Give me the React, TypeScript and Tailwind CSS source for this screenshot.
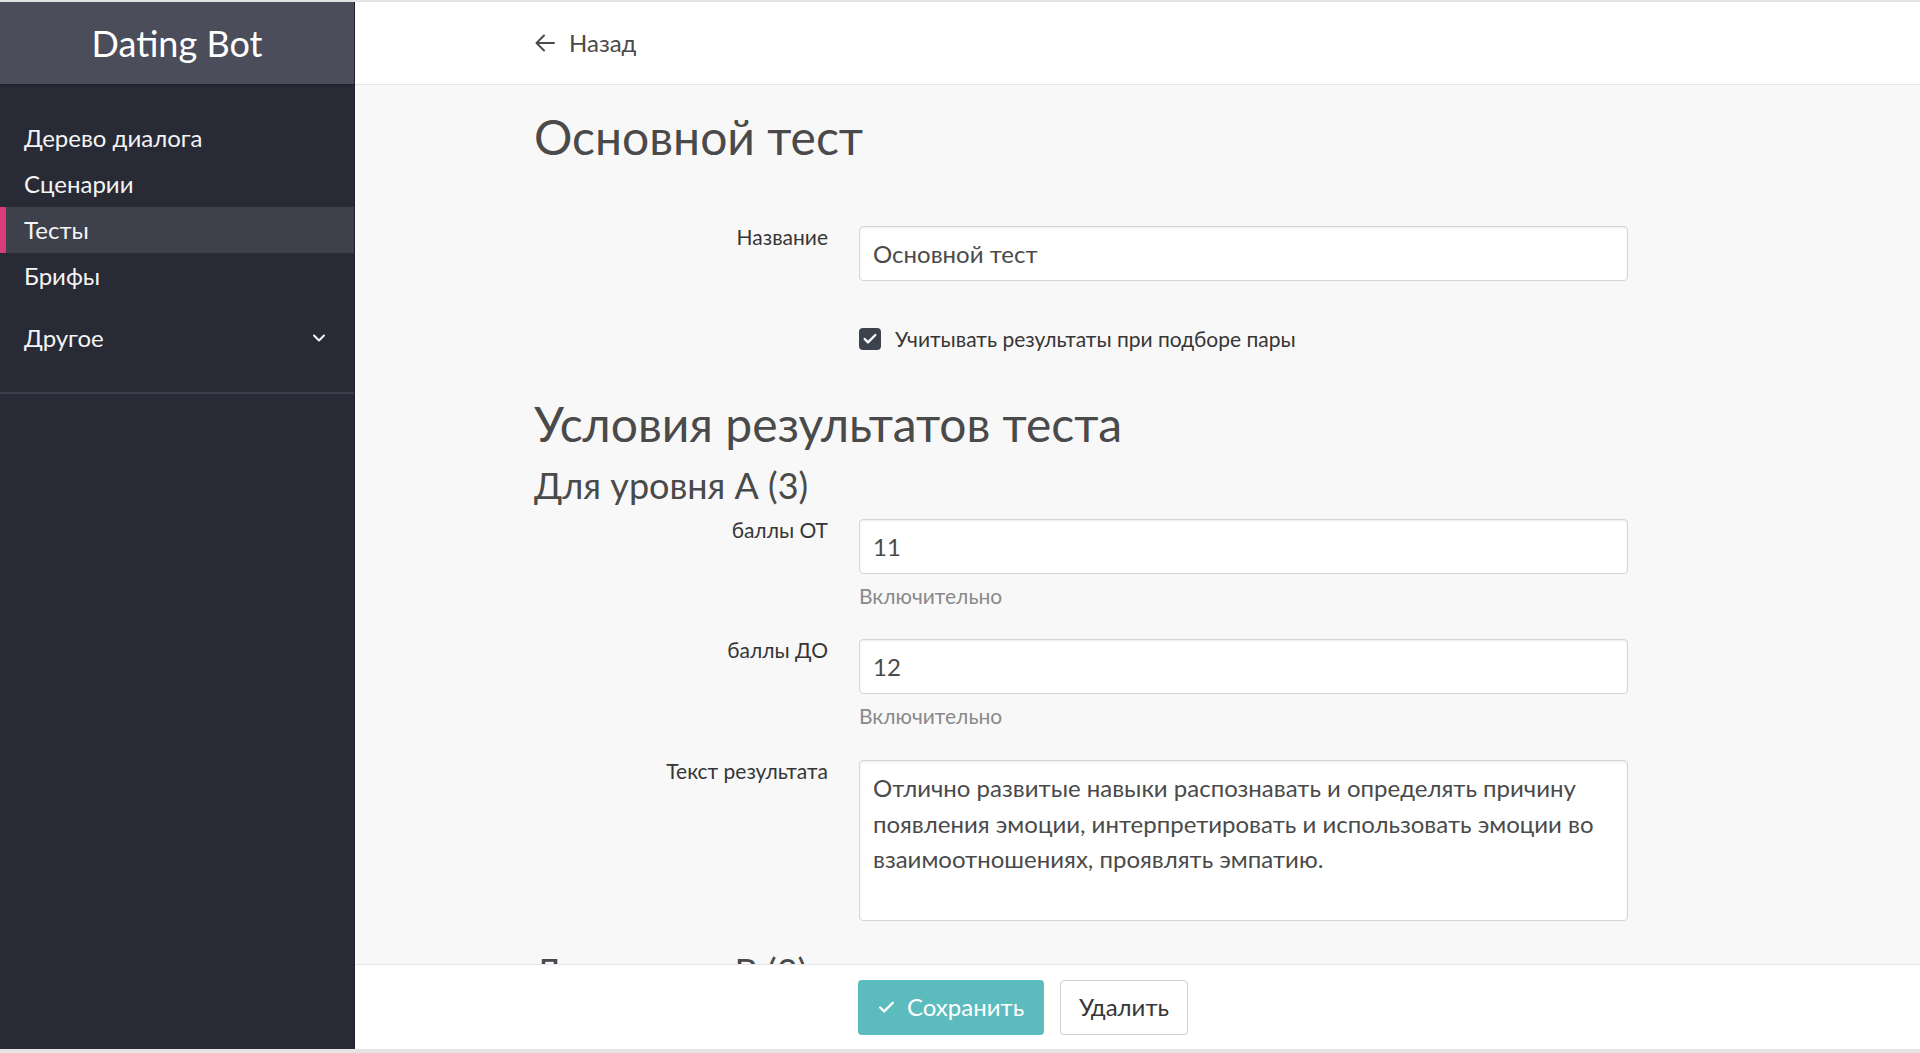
import { ChevronDown, Check } from "lucide-react";

const menu = ["Дерево диалога", "Сценарии", "Тесты", "Брифы"];

function Field({ label, children, help }: { label: string; children: React.ReactNode; help?: string }) {
  return (
    <div className="grid grid-cols-[294px_769px] gap-x-[31px]">
      <div className="text-right text-[21px] leading-[22px] text-[#363636]">{label}</div>
      <div>
        {children}
        {help && <p className="mt-[10px] text-[21px] leading-[24px] text-[#8a8a8a]">{help}</p>}
      </div>
    </div>
  );
}

const inputCls =
  "block w-full h-[55px] rounded-[4px] border border-[#d3d6db] bg-white px-[13px] text-[24px] text-[#4a4a4a] shadow-[inset_0_1px_2px_rgba(10,10,10,0.08)] outline-none";

export default function App() {
  return (
    <div className="h-screen w-full bg-[#e4e4e4] pt-[2px] pb-[4px] font-['Lato',sans-serif]">
      <div className="flex h-full">
        {/* Sidebar */}
        <aside className="w-[355px] shrink-0 bg-[#282a36] border-r border-[#1f2029] flex flex-col">
          <div className="h-[82px] bg-[#4b4e5a] flex items-center justify-center shadow-[0_2px_3px_rgba(0,0,0,0.2)]">
            <span className="text-[36px] text-white">Dating Bot</span>
          </div>
          <nav className="pt-[31px]">
            {menu.map((m) => (
              <div
                key={m}
                className={
                  m === "Тесты"
                    ? "h-[46px] flex items-center pl-[24px] text-[24px] text-[#f4f4f4] bg-[#3e414b] shadow-[inset_6px_0_0_#d63d7a]"
                    : "h-[46px] flex items-center pl-[24px] text-[24px] text-[#f4f4f4]"
                }
              >
                {m}
              </div>
            ))}
            <div className="mt-[16px] h-[46px] flex items-center justify-between pl-[24px] pr-[25px] text-[24px] text-[#f4f4f4]">
              <span>Другое</span>
              <ChevronDown size={20} strokeWidth={2.5} />
            </div>
          </nav>
          <div className="mt-[31px] h-[2px] bg-[#3c3e4b]" />
        </aside>

        {/* Main */}
        <main className="flex-1 flex flex-col min-w-0">
          <header className="h-[83px] shrink-0 bg-white border-b border-[#e6e6e6] flex items-center pl-[180px]">
            <div className="flex items-center gap-[14px] text-[24px] text-[#4a4a4a]">
              <svg width="20" height="18" viewBox="0 0 20 18" fill="none" stroke="currentColor" strokeWidth="2" strokeLinecap="round" strokeLinejoin="round">
                <path d="M19 9H1.5M9 1.5L1.5 9L9 16.5" />
              </svg>
              <span>Назад</span>
            </div>
          </header>

          <div className="flex-1 overflow-hidden bg-[#f8f8f8] pl-[179px]">
            <h1 className="mt-[23px] text-[48px] leading-[58px] text-[#4a4a4a]">Основной тест</h1>

            <div className="mt-[60px]">
              <Field label="Название">
                <input className={inputCls} defaultValue="Основной тест" />
              </Field>
            </div>

            <div className="mt-[46px] h-[24px] pl-[325px] flex items-center gap-[14px]">
              <span className="w-[22px] h-[22px] rounded-[4px] bg-[#3d434d] flex items-center justify-center">
                <Check size={16} strokeWidth={3.5} className="text-white" />
              </span>
              <span className="text-[21px] leading-[24px] text-[#363636]">Учитывать результаты при подборе пары</span>
            </div>

            <h2 className="mt-[44px] text-[48px] leading-[58px] text-[#4a4a4a]">Условия результатов теста</h2>
            <h3 className="mt-[10px] text-[36px] leading-[44px] text-[#4a4a4a]">Для уровня А (3)</h3>

            <div className="mt-[12px]">
              <Field label="баллы ОТ" help="Включительно">
                <input className={inputCls} defaultValue="11" />
              </Field>
            </div>
            <div className="mt-[31px]">
              <Field label="баллы ДО" help="Включительно">
                <input className={inputCls} defaultValue="12" />
              </Field>
            </div>
            <div className="mt-[32px]">
              <Field label="Текст результата">
                <textarea
                  className="block w-full h-[161px] resize-none rounded-[4px] border border-[#d3d6db] bg-white px-[13px] py-[9px] text-[24px] leading-[35.5px] text-[#4a4a4a] shadow-[inset_0_1px_2px_rgba(10,10,10,0.08)] outline-none"
                  defaultValue="Отлично развитые навыки распознавать и определять причину появления эмоции, интерпретировать и использовать эмоции во взаимоотношениях, проявлять эмпатию."
                />
              </Field>
            </div>

            <h3 className="mt-[28px] text-[36px] leading-[44px] text-[#4a4a4a]">Для уровня В (3)</h3>
          </div>

          <footer className="h-[85px] shrink-0 bg-white border-t border-[#e8e8e8] flex items-center gap-[16px] pl-[503px]">
            <button className="w-[186px] h-[55px] pl-[19px] rounded-[4px] bg-[#5cbbbd] text-white text-[24px] flex items-center gap-[11px]">
              <Check size={19} strokeWidth={3} />
              Сохранить
            </button>
            <button className="w-[128px] h-[55px] rounded-[4px] bg-white border border-[#d0d0d0] text-[#363636] text-[24px] flex items-center justify-center">
              Удалить
            </button>
          </footer>
        </main>
      </div>
    </div>
  );
}
